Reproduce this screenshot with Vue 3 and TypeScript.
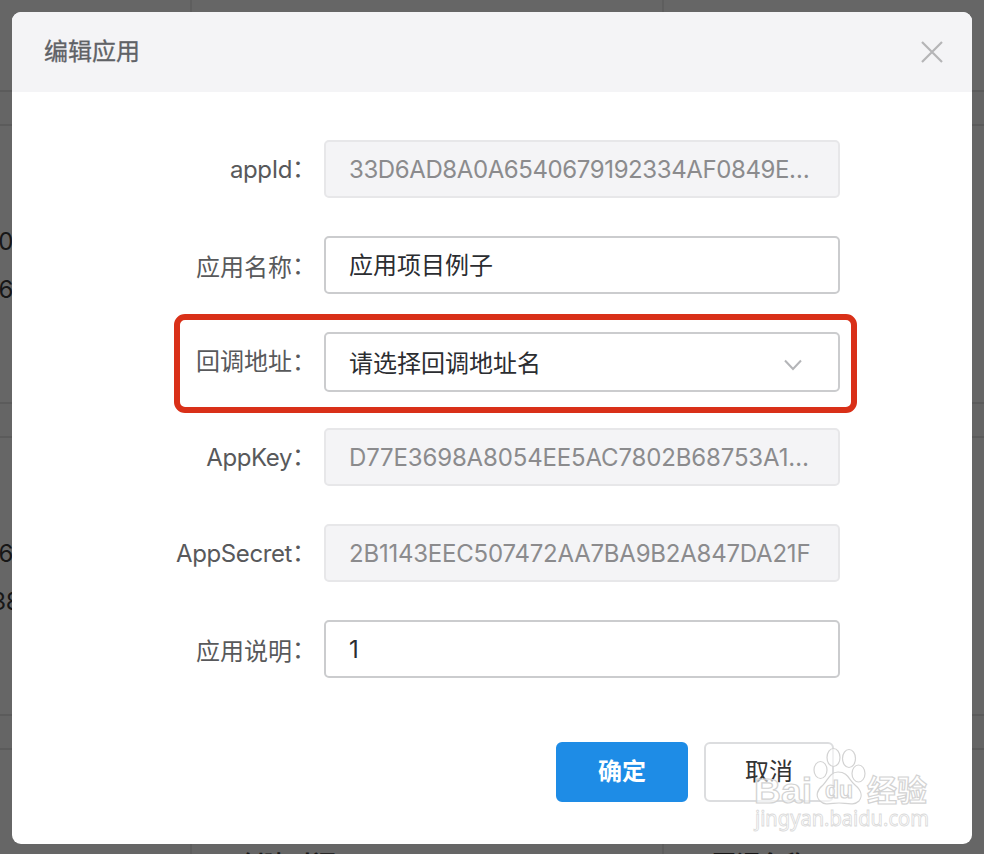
<script setup lang="ts">
interface Field {
  label: string
  value: string
  kind: 'disabled' | 'input' | 'select'
  tone: string
}

const fields: Field[] = [
  { label: 'appId', value: '33D6AD8A0A6540679192334AF0849E…', kind: 'disabled', tone: 'app-id' },
  { label: '应用名称', value: '应用项目例子', kind: 'input', tone: 'name' },
  { label: '回调地址', value: '请选择回调地址名', kind: 'select', tone: 'callback' },
  { label: 'AppKey', value: 'D77E3698A8054EE5AC7802B68753A1…', kind: 'disabled', tone: 'key' },
  { label: 'AppSecret', value: '2B1143EEC507472AA7BA9B2A847DA21F', kind: 'disabled', tone: 'secret' },
  { label: '应用说明', value: '1', kind: 'input', tone: 'note' },
]
</script>

<template>
  <div class="screen">
    <div class="page">
      <div class="row head"><i></i><i></i><i></i></div>
      <div class="gap"></div>
      <div class="row card"><span>0</span><span>6</span></div>
      <div class="gap"></div>
      <div class="row card"><span>6</span><span class="shift">38</span></div>
      <div class="gap"></div>
      <div class="row foot"><i></i><i>创建时间</i><i>回调名称</i></div>
    </div>

    <section class="modal">
      <header class="title">
        <span>编辑应用</span>
        <svg class="close" width="24" height="24" viewBox="0 0 24 24">
          <path d="M2 2 22 22M22 2 2 22" />
        </svg>
      </header>
      <form class="form" @submit.prevent>
        <div v-for="f in fields" :key="f.label" class="field" :class="[f.tone, f.kind]">
          <label><span class="word">{{ f.label }}</span><span class="colon">：</span></label>
          <div class="control">
            <span class="value">{{ f.value }}</span>
            <svg v-if="f.kind === 'select'" width="20" height="14" viewBox="0 0 20 14">
              <path d="M2 2.5 10 11 18 2.5" />
            </svg>
          </div>
          <div v-if="f.kind === 'select'" class="marker"></div>
        </div>
      </form>
      <footer class="actions">
        <button class="btn primary" type="button">确定</button>
        <button class="btn" type="button">取消</button>
      </footer>
    </section>

    <svg class="watermark" width="190" height="90" viewBox="745 745 190 90">
      <g class="outline">
        <text x="754" y="803" font-size="35" textLength="58" lengthAdjust="spacingAndGlyphs">Bai</text>
        <ellipse cx="820.5" cy="770" rx="6.5" ry="8.5" />
        <ellipse cx="833.5" cy="757.5" rx="6.5" ry="9" />
        <ellipse cx="849" cy="758.5" rx="6.5" ry="9" />
        <ellipse cx="858.5" cy="773.5" rx="6.5" ry="8.5" />
        <path d="M838 772C830 772 828 780 823 785C817 790 815 796 820 801C825 806 832 803 839 803C846 803 854 806 859 801C863 796 861 790 855 785C849 780 848 772 838 772Z" />
        <text x="825" y="798" font-size="24" textLength="28" lengthAdjust="spacingAndGlyphs">du</text>
        <text class="cn" x="867" y="801" font-size="30" textLength="60" lengthAdjust="spacingAndGlyphs">经验</text>
        <text class="url" x="755" y="826" font-size="22" textLength="174" lengthAdjust="spacingAndGlyphs">jingyan.baidu.com</text>
      </g>
    </svg>
  </div>
</template>

<style>
body { background: #666; overflow: hidden; }
</style>

<style scoped>
.screen {
  position: relative;
  width: 984px;
  height: 854px;
  overflow: hidden;
  background: #656565;
  font-family: Inter, "Noto Sans CJK SC", sans-serif;
  font-size: 24px;
}
.page { display: flex; flex-direction: column; color: #171717; }
.row { box-sizing: border-box; flex: none; border-bottom: 2px solid #5b5b5b; background: #666; }
.gap { height: 32px; flex: none; }
.head { height: 92px; display: grid; grid-template-columns: 192px 472px 1fr; }
.head i:not(:last-child) { border-right: 2px solid #5e5e5e; }
.card { height: 280px; border-top: 2px solid #5b5b5b; padding-top: 92px; display: flex; flex-direction: column; }
.card span { width: 13px; height: 48px; line-height: 48px; display: flex; justify-content: flex-end; letter-spacing: -0.5px; }
.card .shift { width: 20px; }
.foot { height: 106px; border-top: 2px solid #5b5b5b; border-bottom: 0; display: grid; grid-template-columns: 192px 472px 1fr; overflow: hidden; }
.foot i { font-style: normal; font-weight: 700; line-height: 36px; padding: 97px 0 0 48px; }
.foot i:not(:last-child) { border-right: 2px solid #5e5e5e; }

.modal {
  position: absolute;
  inset: 12px 12px 10px;
  box-sizing: border-box;
  display: flex;
  flex-direction: column;
  background: #fff;
  border-radius: 9px;
  overflow: hidden;
}
.title {
  box-sizing: border-box;
  height: 80px;
  flex: none;
  display: flex;
  align-items: center;
  justify-content: space-between;
  padding: 0 28px 0 32px;
  background: #f4f4f6;
  color: #606266;
}
.title span { padding-bottom: 5px; -webkit-text-stroke: 0.3px currentColor; }
.close { fill: none; stroke: #b5b5b7; stroke-width: 2.2; }
.form { display: flex; flex-direction: column; gap: 38px; padding-top: 48px; }
.field { position: relative; display: flex; height: 58px; padding-right: 132px; }
label {
  width: 312px;
  flex: none;
  display: flex;
  justify-content: flex-end;
  align-items: center;
  color: #58595b;
  box-sizing: border-box;
  padding-right: 8px;
}
.word { letter-spacing: -0.4px; padding-top: 1px; }
.colon { font-family: "Noto Sans CJK SC", sans-serif; padding-bottom: 6px; }
.name .word, .note .word, .callback .word { letter-spacing: 0; }
.name .word, .note .word { padding-top: 0; }
.callback .word { padding: 0 0 5px; }
.name .colon, .note .colon { padding-bottom: 3px; }
.control {
  flex: 1;
  box-sizing: border-box;
  display: flex;
  align-items: center;
  justify-content: space-between;
  padding: 0 35px 0 23px;
  border: 2px solid #cbccce;
  border-radius: 5px;
  color: #2b2d31;
}
.disabled .control { background: #f4f4f6; border-color: #e7e7e9; color: #8b8b8d; padding-right: 0; }
.value { white-space: nowrap; }
.name .value { padding-bottom: 3px; }
.note .value { padding-top: 1px; }
.app-id .value { letter-spacing: -0.4px; }
.key .value { letter-spacing: -0.15px; }
.secret .value { letter-spacing: -0.22px; }
.select { height: 60px; margin-bottom: -2px; }
.select .control svg { fill: none; stroke: #b4b5b8; stroke-width: 2; margin-top: 5px; }
.select .control .value { padding-bottom: 2px; }
.marker {
  position: absolute;
  inset: -18px 115px -21px 162px;
  border: 6px solid #d93018;
  border-radius: 11px;
}
.actions { display: flex; justify-content: flex-end; gap: 16px; padding: 64px 138px 0 0; }
.btn {
  box-sizing: border-box;
  width: 130px;
  height: 60px;
  padding: 0 0 5px;
  font: inherit;
  color: #333;
  background: #fff;
  border: 2px solid #dcdddf;
  border-radius: 6px;
}
.primary { width: 132px; background: #1e8ce6; border-color: #1e8ce6; color: #fff; font-weight: 700; }
.watermark { position: absolute; left: 745px; top: 745px; }
.outline { fill: rgba(255, 255, 255, 0.6); stroke: #d3d3d3; stroke-width: 1.2; font-family: "Liberation Sans", sans-serif; font-weight: 700; }
.outline .cn { font-family: "Noto Sans CJK SC", sans-serif; }
.outline .url { font-family: "Noto Sans", sans-serif; font-weight: 400; stroke: #dadada; stroke-width: 0.9; }
</style>
